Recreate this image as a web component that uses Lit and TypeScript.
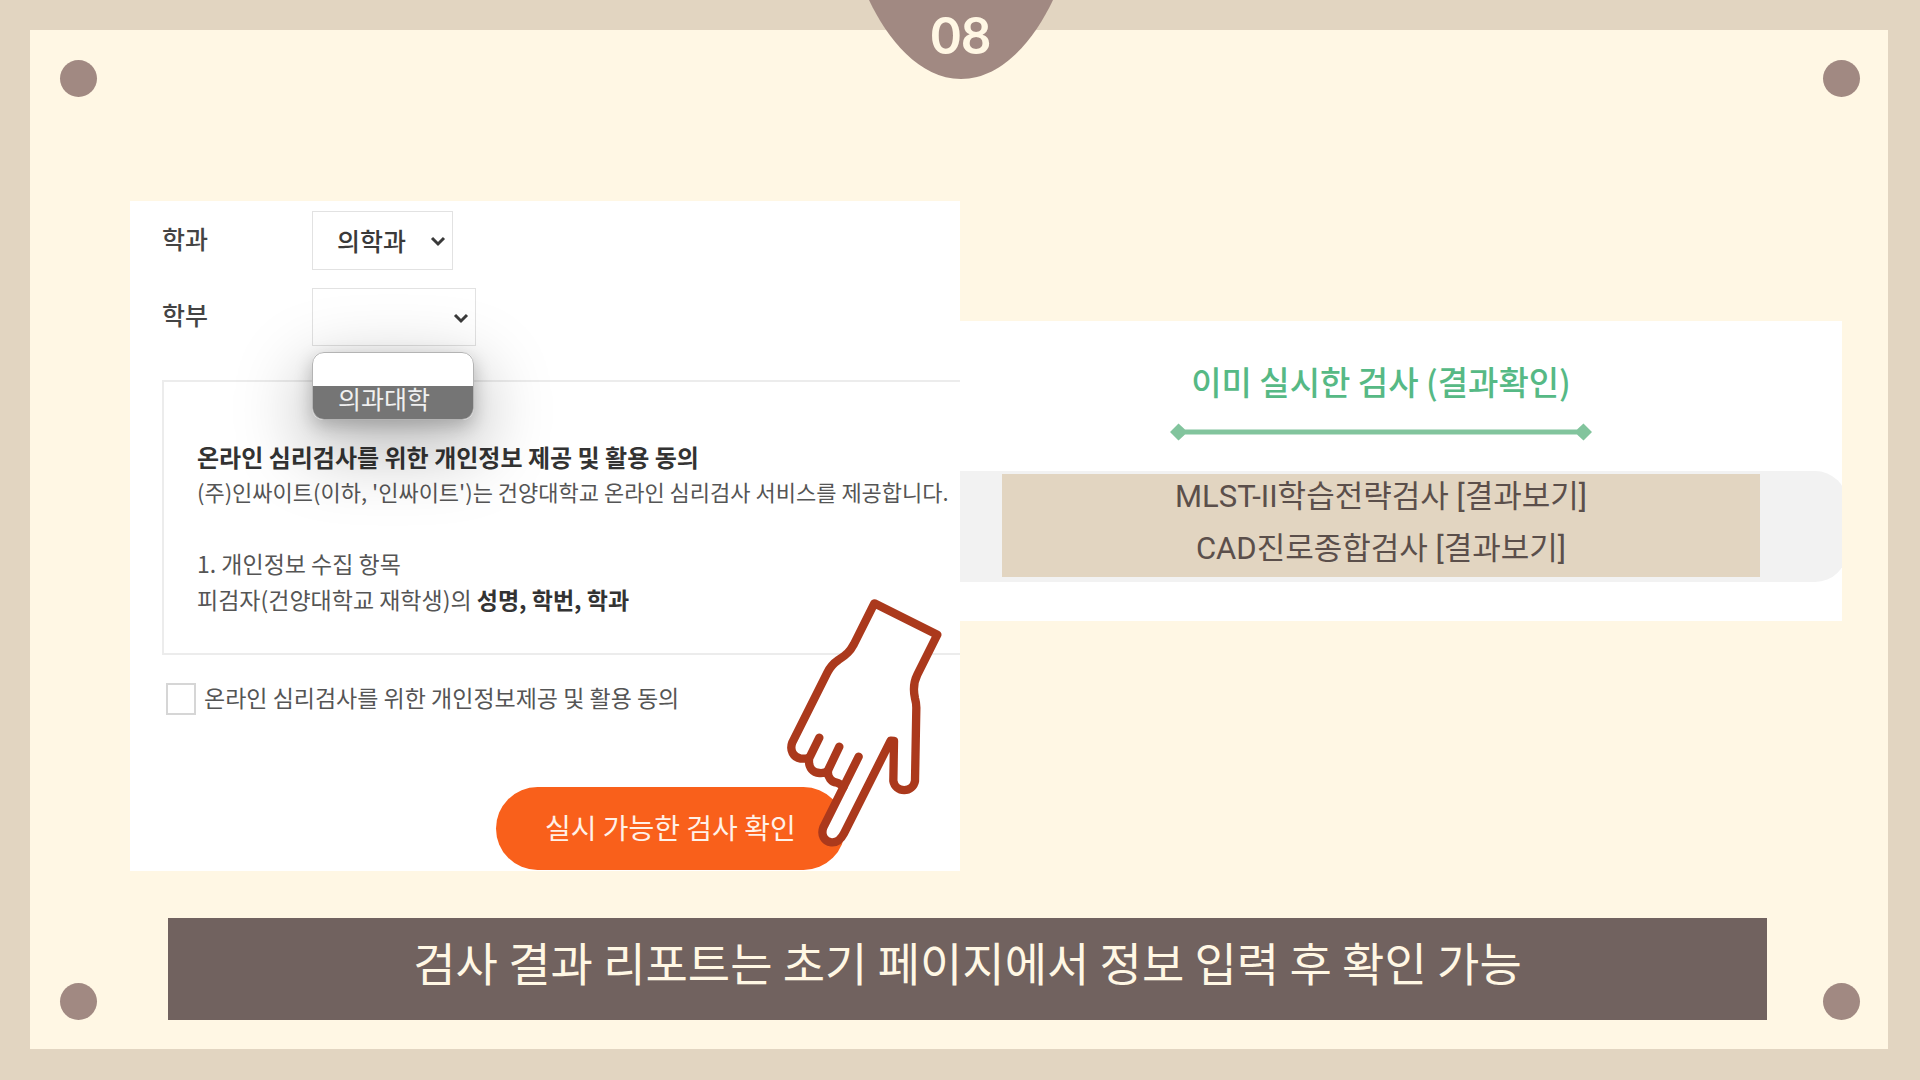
import { LitElement, html, css } from "lit";
import { customElement, property } from "lit/decorators.js";

/** Consent form: department selects, privacy notice and submit button. */
@customElement("consent-form")
class ConsentForm extends LitElement {
  static styles = css`
    :host {
      display: block;
      position: relative;
      background: #fff;
      overflow: hidden;
    }
    .form {
      display: flex;
      flex-direction: column;
      padding: 10px 0 1px 32px;
      color: #444;
    }
    .field {
      display: grid;
      grid-template-columns: 150px 1fr;
      align-items: center;
      margin-bottom: 18px;
      font-size: 25px;
      font-weight: 500;
    }
    .name {
      padding-bottom: 6px;
    }
    .control {
      position: relative;
      display: flex;
      justify-self: start;
    }
    .select {
      appearance: none;
      box-sizing: border-box;
      width: 141px;
      height: 59px;
      padding: 0 40px 2px 24px;
      border: 1px solid #e2e2e2;
      border-radius: 0;
      background: #fff;
      color: #3a3a3a;
      font: inherit;
    }
    .select.wide {
      width: 164px;
      height: 58px;
    }
    .chevron {
      position: absolute;
      right: 7px;
      top: 24px;
      width: 16px;
      height: 12px;
      pointer-events: none;
    }
    .menu {
      position: absolute;
      z-index: 2;
      top: 64px;
      left: 0;
      box-sizing: border-box;
      width: 162px;
      margin: 0;
      padding: 0;
      list-style: none;
      border: 1px solid #b4b4b4;
      border-radius: 12px;
      background: #fff;
      overflow: hidden;
      font-weight: 400;
    }
    .menu-shadow {
      position: absolute;
      z-index: 1;
      top: 64px;
      left: 0;
      width: 162px;
      height: 68px;
      border-radius: 12px;
      box-shadow: 0 6px 18px rgba(0, 0, 0, 0.22), 0 24px 70px 8px rgba(0, 0, 0, 0.26);
    }
    .option {
      height: 33px;
      padding-left: 25px;
      line-height: 24px;
    }
    .option.active {
      background: #757575;
      color: #f0f0f0;
    }
    .notice {
      box-sizing: border-box;
      min-height: 275px;
      margin-top: 16px;
      padding: 59px 0 32px 33px;
      border: 2px solid #ececec;
      border-right: 0;
      font-size: 22px;
      line-height: 36px;
      color: #555;
      white-space: nowrap;
    }
    .notice p {
      margin: 0;
    }
    .notice .title {
      font-size: 24px;
      line-height: 32px;
    }
    .notice .section {
      margin-top: 36px;
    }
    .notice b {
      color: #333;
    }
    .notice .items {
      font-size: 23px;
    }
    .agree {
      display: flex;
      align-items: center;
      gap: 8px;
      margin: 28px 0 72px 4px;
      font-size: 23px;
      line-height: 28px;
      color: #555;
    }
    .terms {
      padding-bottom: 4px;
    }
    .box {
      appearance: none;
      box-sizing: border-box;
      width: 30px;
      height: 32px;
      margin: 0;
      border: 2px solid #d6d6d6;
      background: #fff;
    }
    .submit {
      align-self: flex-start;
      height: 83px;
      margin: 0 0 0 334px;
      padding: 0 49px 4px;
      border: 0;
      border-radius: 42px;
      background: #f9601b;
      color: #fff1e8;
      font: inherit;
      font-size: 28px;
      line-height: 40px;
    }
    .hand {
      position: absolute;
      right: 15px;
      bottom: 22px;
      width: 162px;
      height: 253px;
      pointer-events: none;
    }
  `;

  private chevron() {
    return html`<svg class="chevron" viewBox="0 0 16 12" aria-hidden="true">
      <path d="M2 3L8 9L14 3" fill="none" stroke="#3a3a3a" stroke-width="3" />
    </svg>`;
  }

  render() {
    return html`
      <form class="form">
        <div class="field">
          <label class="name" for="dept">학과</label>
          <div class="control">
            <select class="select" id="dept">
              <option>의학과</option>
            </select>
            ${this.chevron()}
          </div>
        </div>
        <div class="field">
          <label class="name" for="faculty">학부</label>
          <div class="control">
            <select class="select wide" id="faculty">
              <option></option>
              <option>의과대학</option>
            </select>
            ${this.chevron()}
            <div class="menu-shadow"></div>
            <ul class="menu" role="listbox">
              <li class="option" role="option"></li>
              <li class="option active" role="option" aria-selected="true">의과대학</li>
            </ul>
          </div>
        </div>
        <div class="notice">
          <p class="title"><b>온라인 심리검사를 위한 개인정보 제공 및 활용 동의</b></p>
          <p>(주)인싸이트(이하, '인싸이트')는 건양대학교 온라인 심리검사 서비스를 제공합니다.</p>
          <p class="section items">1. 개인정보 수집 항목</p>
          <p class="items">피검자(건양대학교 재학생)의 <b>성명, 학번, 학과</b></p>
        </div>
        <div class="agree">
          <input class="box" type="checkbox" id="agree" />
          <label class="terms" for="agree">온라인 심리검사를 위한 개인정보제공 및 활용 동의</label>
        </div>
        <button class="submit" type="button">실시 가능한 검사 확인</button>
      </form>
      <svg class="hand" viewBox="129 45 486 759" aria-hidden="true">
        <g stroke="#ab391c" stroke-width="25" stroke-linecap="round" stroke-linejoin="round">
          <path
            fill="#fff"
            d="M403 67L592 161L532 281C520 305 520 330 525 352Q529 366 529 380L525 600A33 33 0 0 1 460 600L462 480L452 479L312 757C300 780 285 785 274 784C252 781 242 761 250 739L310 619C300 607 296 606 290 605C274 603 262 588 264 571C254 576 246 577 238 576C219 575 206 560 207 538L204 531C197 534 190 533 182 533C160 529 148 508 157 484L262 275Q273 252 295 237C318 221 328 215 342 189Z"
          />
          <path fill="none" d="M238 470L207 533M298 497L264 568M356 527L310 619" />
        </g>
      </svg>
    `;
  }
}

/** Card that lists the finished tests with links to their results. */
@customElement("result-card")
class ResultCard extends LitElement {
  static styles = css`
    :host {
      display: block;
      background: #fff;
      overflow: hidden;
    }
    .head {
      display: flex;
      flex-direction: column;
      align-items: center;
      padding: 36px 40px 30px 0;
    }
    .title {
      margin: 0;
      font-size: 33px;
      font-weight: 500;
      line-height: 48px;
      color: #56b985;
    }
    .rule {
      width: 422px;
      height: 18px;
      margin-top: 18px;
    }
    .band {
      margin: 0 -5px 39px 0;
      padding: 3px 87px 5px 42px;
      border-radius: 0 32px 32px 0;
      background: #f2f2f2;
    }
    .list {
      margin: 0;
      padding: 0 0 3px;
      list-style: none;
      background: #e2d5c1;
      color: #5b4f4b;
      font-family: Roboto, "Noto Sans CJK KR", sans-serif;
      font-size: 31px;
      text-align: center;
    }
    .item {
      height: 50px;
      line-height: 46px;
    }
    .item + .item {
      padding-top: 2px;
      height: 48px;
    }
    .link {
      color: inherit;
      text-decoration: none;
    }
  `;

  @property({ attribute: false }) tests: string[] = [];

  render() {
    return html`
      <div class="head">
        <h2 class="title">이미 실시한 검사 (결과확인)</h2>
        <svg class="rule" viewBox="0 0 422 18" aria-hidden="true">
          <path
            fill="#82c49d"
            d="M0 9L8.500 .5L15 6.500H407L413.500 .5L422 9L413.500 17.500L407 11.500H15L8.500 17.500Z"
          />
        </svg>
      </div>
      <div class="band">
        <ul class="list">
          ${this.tests.map(
            (name) => html`<li class="item">${name} <a class="link" href="#">[결과보기]</a></li>`
          )}
        </ul>
      </div>
    `;
  }
}

@customElement("app-root")
class AppRoot extends LitElement {
  static styles = css`
    :host {
      display: block;
      font-family: "Noto Sans CJK KR", "Noto Sans", sans-serif;
    }
    .slide {
      position: relative;
      box-sizing: border-box;
      min-height: 100vh;
      padding: 30px 32px 31px 30px;
      background: #e2d5c1;
      display: flex;
    }
    .paper {
      position: relative;
      flex: 1;
      display: flex;
      flex-direction: column;
      padding-bottom: 29px;
      background: #fff7e4;
    }
    .tab {
      position: absolute;
      z-index: 1;
      top: 0;
      left: 50%;
      width: 184px;
      height: 79px;
      margin-left: -91px;
    }
    .tab-shape {
      position: absolute;
      inset: 0;
      width: 100%;
      height: 100%;
    }
    .number {
      position: relative;
      margin: 0;
      text-align: center;
      font-family: Lato, sans-serif;
      font-size: 52px;
      font-weight: 700;
      line-height: 68px;
      color: #fff7e4;
    }
    .dot {
      position: absolute;
      width: 37px;
      height: 37px;
      border-radius: 50%;
      background: #a18982;
    }
    .top {
      top: 30px;
    }
    .bottom {
      bottom: 29px;
    }
    .left {
      left: 30px;
    }
    .right {
      right: 28px;
    }
    .columns {
      flex: 1;
      display: grid;
      grid-template-columns: 830fr 882fr;
      align-items: start;
      padding: 171px 46px 47px 100px;
    }
    .results {
      margin-top: 120px;
    }
    .banner {
      margin: 0 121px 0 138px;
      padding: 9px 0 25px;
      background: #71625f;
      color: #fff7e4;
      font-size: 46px;
      font-weight: 400;
      line-height: 68px;
      text-align: center;
    }
  `;

  private tests = ["MLST-II학습전략검사", "CAD진로종합검사"];

  render() {
    return html`
      <main class="slide">
        <header class="tab">
          <svg class="tab-shape" viewBox="0 0 184 79" aria-hidden="true">
            <path fill="#a18982" d="M0 0H184C166 38 134 79 92 79S18 38 0 0Z" />
          </svg>
          <h1 class="number">08</h1>
        </header>
        <section class="paper">
          <span class="dot top left"></span>
          <span class="dot top right"></span>
          <span class="dot bottom left"></span>
          <span class="dot bottom right"></span>
          <div class="columns">
            <consent-form></consent-form>
            <result-card class="results" .tests=${this.tests}></result-card>
          </div>
          <h2 class="banner">검사 결과 리포트는 초기 페이지에서 정보 입력 후 확인 가능</h2>
        </section>
      </main>
    `;
  }
}
